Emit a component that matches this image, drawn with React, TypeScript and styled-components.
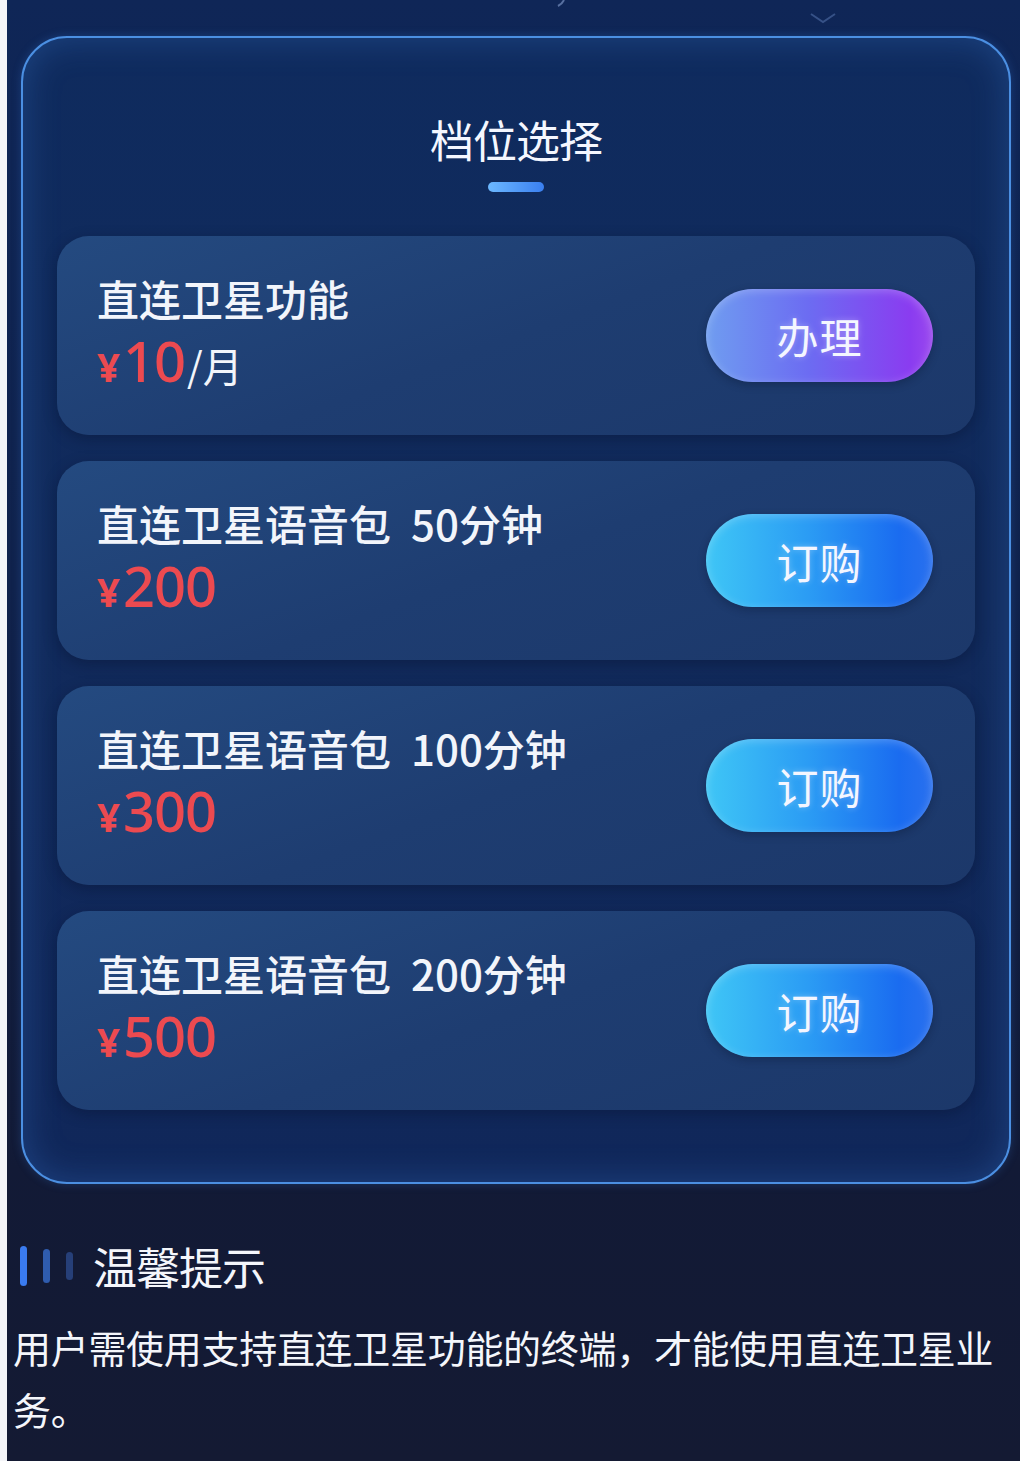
import React from 'react';
import styled, { createGlobalStyle } from 'styled-components';

const GlobalStyle = createGlobalStyle`
    html, body {
        margin: 0;
        padding: 0;
        background: #f4f5f8;
    }
    body {
        font-family: "Noto Sans CJK SC", "Noto Sans", sans-serif;
    }
`;

const Page = styled.div`
    margin-left: 7px;
    min-height: 1461px;
    background: linear-gradient(180deg, #0f2657 0%, #10224c 40%, #121a36 80%, #141a33 100%);
    color: #fff;
    overflow: hidden;
`;

const TopStrip = styled.div`
    height: 36px;
    position: relative;
`;

const Chevron = styled.svg`
    position: absolute;
    left: 800px;
    top: 6px;
    opacity: 0.35;
`;

const Arc = styled.svg`
    position: absolute;
    left: 545px;
    top: 0;
    opacity: 0.5;
`;

const Panel = styled.section`
    margin: 0 9px 0 14px;
    border: 2px solid #4b8fe2;
    border-radius: 46px;
    background: linear-gradient(180deg, #0f2b5e 0%, #112a5b 50%, #10275a 100%);
    box-shadow: inset 0 0 36px rgba(70, 140, 235, 0.28), 0 0 10px rgba(60, 130, 230, 0.25);
    padding: 74px 34px 72px 34px;
    display: flex;
    flex-direction: column;
    align-items: center;
`;

const PanelTitle = styled.h2`
    margin: 0;
    font-size: 44px;
    line-height: 54px;
    font-weight: 400;
    letter-spacing: -1px;
    color: #f4f7ff;
`;

const TitleBar = styled.div`
    margin-top: 16px;
    width: 56px;
    height: 10px;
    border-radius: 5px;
    background: linear-gradient(90deg, #6cb8ff 0%, #3a7ff0 100%);
`;

const CardList = styled.div`
    margin-top: 44px;
    width: 100%;
    display: flex;
    flex-direction: column;
    gap: 26px;
`;

const Card = styled.div`
    height: 199px;
    box-sizing: border-box;
    border-radius: 32px;
    background: linear-gradient(160deg, #244a80 0%, #1e3d71 50%, #1c386a 100%);
    box-shadow: 0 4px 14px rgba(5, 15, 40, 0.35);
    display: flex;
    align-items: center;
    justify-content: space-between;
    padding: 0 42px 0 40px;
`;

const Info = styled.div`
    display: flex;
    flex-direction: column;
`;

const CardTitle = styled.div`
    font-size: 42px;
    line-height: 50px;
    font-weight: 500;
    color: #f2f5fb;
`;

const Minutes = styled.span`
    margin-left: 20px;
`;

const PriceRow = styled.div`
    margin-top: 6px;
    display: flex;
    align-items: baseline;
    line-height: 62px;
`;

const Yen = styled.span`
    font-family: "Noto Sans", sans-serif;
    font-size: 40px;
    font-weight: 700;
    color: #ec4a50;
    margin-right: 3px;
`;

const Amount = styled.span`
    font-family: "Noto Sans", "Open Sans", sans-serif;
    font-size: 56px;
    font-weight: 500;
    color: #ec4a50;
    letter-spacing: -1px;
`;

const Unit = styled.span`
    font-size: 40px;
    color: #f2f5fb;
    margin-left: 2px;
`;

const ActionButton = styled.button<{ $variant: 'purple' | 'blue' }>`
    width: 227px;
    height: 93px;
    border: none;
    border-radius: 47px;
    font-family: "Noto Sans CJK SC", sans-serif;
    font-size: 42px;
    color: #f4f6ff;
    letter-spacing: 1px;
    text-shadow: 0 0 6px rgba(255, 255, 255, 0.35);
    cursor: pointer;
    background: ${p => p.$variant === 'purple'
        ? 'linear-gradient(90deg, #6f9df0 0%, #6c6cf2 45%, #8a3cf0 90%, #9a48ee 100%)'
        : 'linear-gradient(90deg, #3fc6f6 0%, #2b9cf4 45%, #1a6cf0 85%, #2a70ee 100%)'};
    box-shadow: inset 0 2px 10px rgba(255, 255, 255, 0.25), 0 3px 8px rgba(5, 15, 40, 0.3);
`;

const Tips = styled.div`
    padding: 58px 6px 0 6px;
`;

const TipsHeader = styled.div`
    display: flex;
    align-items: center;
    gap: 20px;
    padding-left: 7px;
`;

const Bars = styled.div`
    display: flex;
    gap: 16px;
    align-items: center;
`;

const Bar = styled.span<{ $shade: string; $h: number }>`
    width: 7px;
    height: ${p => p.$h}px;
    border-radius: 4px;
    background: ${p => p.$shade};
`;

const TipsTitle = styled.div`
    font-size: 44px;
    line-height: 48px;
    letter-spacing: -1px;
    color: #f4f6fb;
`;

const TipsText = styled.p`
    margin: 26px 0 0 0;
    font-size: 38px;
    line-height: 62px;
    letter-spacing: -0.3px;
    color: #f4f6fb;
`;

interface Plan {
    name: string;
    minutes?: string;
    amount: string;
    unit?: string;
    action: string;
    variant: 'purple' | 'blue';
}

const plans: Plan[] = [
    { name: '直连卫星功能', amount: '10', unit: '/月', action: '办理', variant: 'purple' },
    { name: '直连卫星语音包', minutes: '50分钟', amount: '200', action: '订购', variant: 'blue' },
    { name: '直连卫星语音包', minutes: '100分钟', amount: '300', action: '订购', variant: 'blue' },
    { name: '直连卫星语音包', minutes: '200分钟', amount: '500', action: '订购', variant: 'blue' },
];

const App = () => {
    return (
        <>
            <GlobalStyle />
            <Page>
                <TopStrip>
                    <Arc width="20" height="10" viewBox="0 0 20 10">
                        <path d="M12 0 Q10 4 6 6" stroke="#9fb8e8" strokeWidth="2" fill="none" />
                    </Arc>
                    <Chevron width="32" height="20" viewBox="0 0 32 20">
                        <path d="M4 8 L16 16 L28 8" stroke="#7fa2e0" strokeWidth="2" fill="none" />
                    </Chevron>
                </TopStrip>
                <Panel>
                    <PanelTitle>档位选择</PanelTitle>
                    <TitleBar />
                    <CardList>
                        {plans.map((plan, index) => (
                            <Card key={index}>
                                <Info>
                                    <CardTitle>
                                        {plan.name}
                                        {plan.minutes && <Minutes>{plan.minutes}</Minutes>}
                                    </CardTitle>
                                    <PriceRow>
                                        <Yen>¥</Yen>
                                        <Amount>{plan.amount}</Amount>
                                        {plan.unit && <Unit>{plan.unit}</Unit>}
                                    </PriceRow>
                                </Info>
                                <ActionButton $variant={plan.variant}>{plan.action}</ActionButton>
                            </Card>
                        ))}
                    </CardList>
                </Panel>
                <Tips>
                    <TipsHeader>
                        <Bars>
                            <Bar $shade="#3a7bf0" $h={40} />
                            <Bar $shade="#2f5cae" $h={34} />
                            <Bar $shade="#263f78" $h={28} />
                        </Bars>
                        <TipsTitle>温馨提示</TipsTitle>
                    </TipsHeader>
                    <TipsText>用户需使用支持直连卫星功能的终端，才能使用直连卫星业务。</TipsText>
                </Tips>
            </Page>
        </>
    );
};

export default App;
